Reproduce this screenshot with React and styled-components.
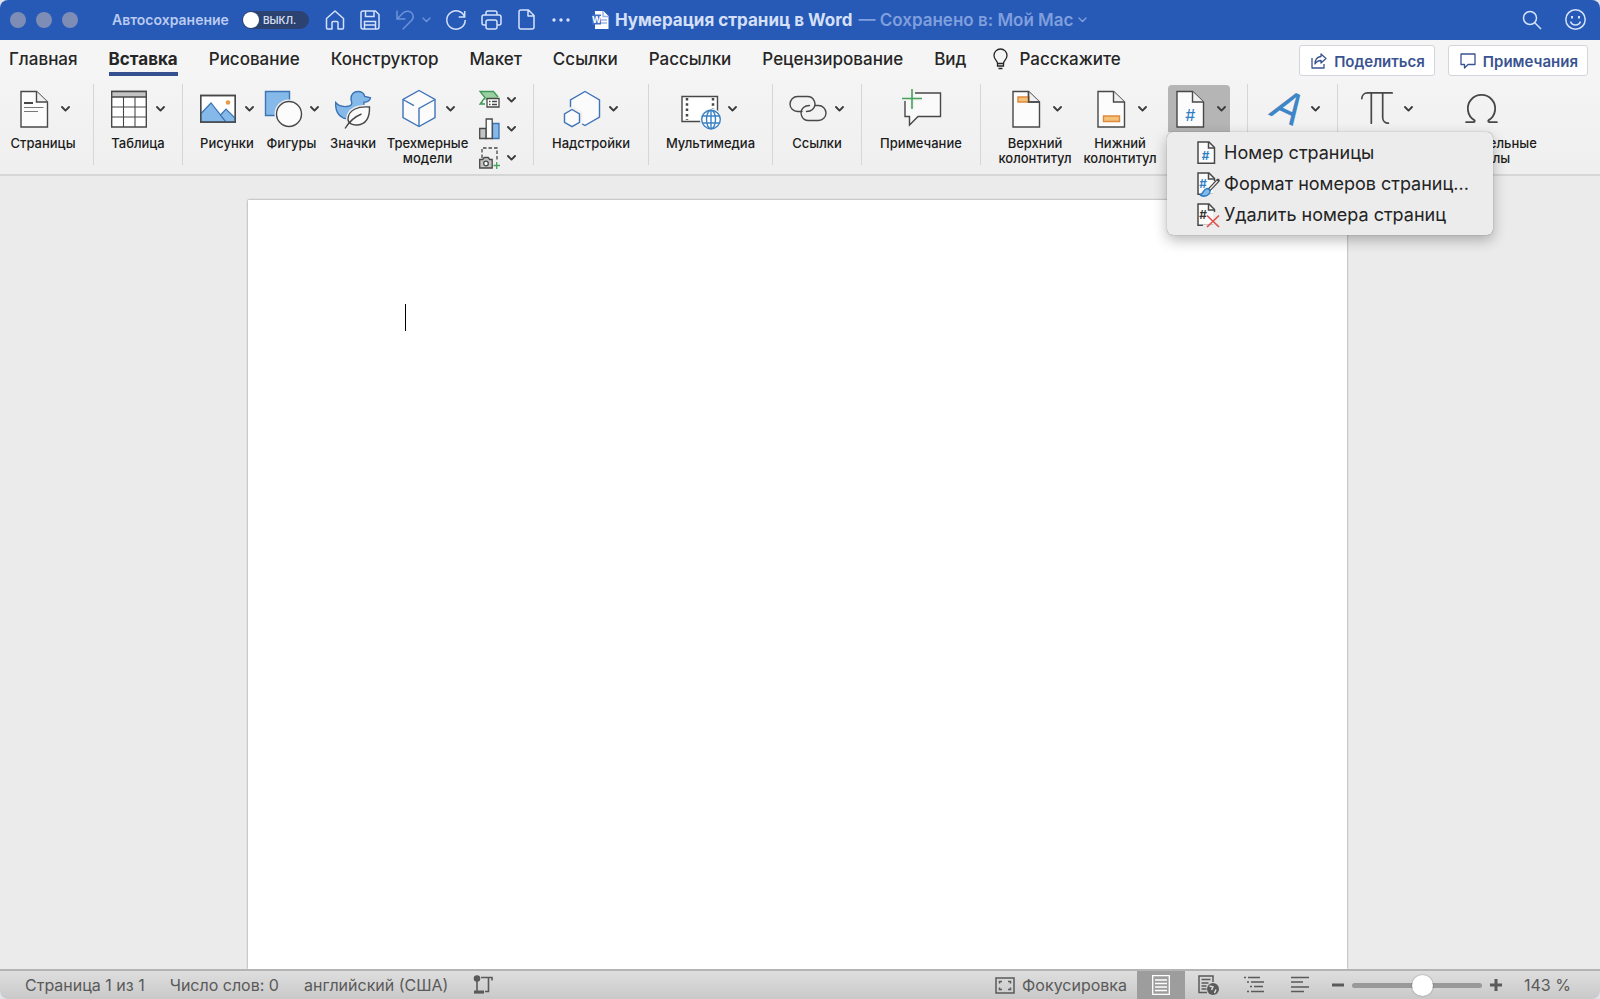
import React from "react"
import styled, { createGlobalStyle, css, ThemeProvider } from "styled-components"
import { Omega, Pi } from "lucide-react"

const theme = {
  colors: {
    title: "#2759b6",
    titleText: "#d5e0f8",
    titleMuted: "#7f9fdd",
    ink: "#262626",
    link: "#3a5391",
    desk: "#ebebeb",
    status: "#5a5a5a",
  },
}

const GlobalStyle = createGlobalStyle`
  * {
    box-sizing: border-box;
  }
  body {
    margin: 0;
    background: #dfe3ea;
    font-family: Inter, "Liberation Sans", sans-serif;
  }
  button {
    margin: 0;
    padding: 0;
    border: 0;
    background: none;
    color: inherit;
    font: inherit;
    white-space: nowrap;
  }
  svg {
    display: block;
    flex: none;
    overflow: visible;
  }
`

const Window = styled.div`
  display: flex;
  flex-direction: column;
  min-height: 100vh;
  border-radius: 8px;
  overflow: hidden;
  background: ${props => props.theme.colors.desk};
`

/* Title bar */
const TitleBar = styled.header`
  display: flex;
  align-items: center;
  height: 40px;
  padding: 0 14px 1px 10px;
  background: ${props => props.theme.colors.title};
  color: ${props => props.theme.colors.titleText};
`
const Lights = styled.div`
  display: flex;
  gap: 10px;
  margin-right: 34px;
`
const Light = styled.button`
  width: 16px;
  height: 16px;
  border-radius: 50%;
  background: #7d8db5;
`
const AutoSave = styled.label`
  display: flex;
  align-items: center;
  gap: 13px;
  font-size: 14px;
  font-weight: 600;
  color: #b9cbf0;
  white-space: nowrap;
`
const Switch = styled.span`
  display: flex;
  align-items: center;
  gap: 4px;
  width: 67px;
  height: 18px;
  padding-left: 1px;
  border-radius: 9px;
  background: #2c4371;
  color: #d3dcee;
  font-size: 10px;
  font-weight: 600;
`
const SwitchBox = styled.input`
  appearance: none;
  margin: 0;
  width: 16px;
  height: 16px;
  border-radius: 50%;
  background: #fff;
`
const QuickBar = styled.div`
  display: flex;
  align-items: center;
  gap: 14px;
  margin: 0 20px 0 16px;
`
const QuickButton = styled.button`
  display: flex;
  align-items: center;
  justify-content: center;
  width: ${props => (props.$slim ? "10px" : "21px")};
  height: 24px;
  color: ${props => (props.$dim ? "#6d92d8" : "#d5e2fb")};
`
const UndoGroup = styled.div`
  display: flex;
  gap: 6px;
`
const DocTitle = styled.h1`
  display: flex;
  align-items: center;
  gap: 6px;
  flex: 1;
  margin: 0;
  font-size: 17px;
  font-weight: 700;
  white-space: nowrap;
`
const SavedIn = styled.button`
  display: flex;
  align-items: center;
  gap: 5px;
  font-weight: 600;
  color: ${props => props.theme.colors.titleMuted};
`
const TitleActions = styled.div`
  display: flex;
  gap: 23px;
`

/* Tabs */
const TabRow = styled.div`
  display: flex;
  align-items: flex-start;
  height: 40px;
  padding: 5px 12px 0 9px;
  background: #f5f5f5;
`
const Tabs = styled.nav`
  display: flex;
  flex: 1;
  gap: 31px;
`
const Tab = styled.button`
  display: flex;
  align-items: center;
  gap: 11px;
  height: 31px;
  border-bottom: 4px solid transparent;
  font-size: 17px;
  font-weight: 500;
  color: ${props => props.theme.colors.ink};
  ${props =>
    props.$active &&
    css`
      font-weight: 700;
      border-image: linear-gradient(#35508f, #35508f) 1;
    `}
`
const TellMe = styled(Tab)`
  margin-left: -4px;
`
const TabActions = styled.div`
  display: flex;
  gap: 13px;
`
const ActionButton = styled.button`
  display: flex;
  align-items: center;
  gap: 7px;
  height: 31px;
  padding: 1px 9px 0 11px;
  border: 1px solid #d2d6dc;
  border-radius: 3px;
  background: #fff;
  color: ${props => props.theme.colors.link};
  font-size: 15px;
  font-weight: 600;
`

/* Ribbon */
const Ribbon = styled.div`
  display: flex;
  height: 96px;
  padding: 4px 0 11px;
  border-bottom: 2px solid #d6d6d6;
  background: linear-gradient(#f4f4f4, #efefef);
`
const Group = styled.div`
  display: flex;
  gap: 10px;
  height: 81px;
  padding: 1px 16px 0;
  border-right: 1px solid #d6d6d6;
  &:first-child {
    padding-left: 9px;
  }
  &:last-child {
    border-right: 0;
  }
`
const Tool = styled.div`
  position: relative;
  display: flex;
  flex-direction: column;
  align-items: center;
  width: ${props => props.$width}px;
`
const ToolButton = styled.button`
  display: flex;
  flex-direction: column;
  align-items: center;
  gap: 4px;
  color: #1c1c1c;
`
const ToolFace = styled.span`
  display: flex;
  align-items: center;
  gap: 9px;
  height: 47px;
  padding: 0 4px;
  border-radius: 4px 4px 0 0;
  color: #3c3c3c;
  background: ${props => (props.$open ? "#b5b5b5" : "transparent")};
`
const ToolLabel = styled.span`
  font-size: 13px;
  font-weight: 500;
  line-height: 15px;
  white-space: pre-line;
`
const SmallTools = styled.div`
  display: flex;
  flex-direction: column;
  width: 40px;
`
const SmallTool = styled.button`
  display: flex;
  align-items: center;
  flex: none;
  gap: 7px;
  height: 29px;
  padding-left: 2px;
  color: #3c3c3c;
`
const Menu = styled.div`
  position: absolute;
  z-index: 2;
  top: 47px;
  left: 0;
  width: 326px;
  padding: 5px 0;
  border-radius: 6px;
  background: #ececec;
  box-shadow: 0 0 1px rgba(0, 0, 0, 0.5), 0 5px 14px rgba(0, 0, 0, 0.28);
`
const MenuItem = styled.button`
  display: flex;
  align-items: center;
  gap: 5px;
  width: 100%;
  height: 31px;
  padding-left: 29px;
  font-size: 18px;
  color: #232323;
`

/* Document */
const Desk = styled.main`
  display: flex;
  flex: 1;
  padding: 24px 253px 0 248px;
`
const Sheet = styled.div`
  flex: 1;
  padding: 104px 157px;
  background: #fff;
  box-shadow: 0 0 2px rgba(0, 0, 0, 0.45);
`
const Caret = styled.span`
  display: block;
  width: 1px;
  height: 27px;
  background: #000;
`

/* Status bar */
const StatusBar = styled.footer`
  display: flex;
  align-items: stretch;
  height: 30px;
  padding: 0 30px 0 25px;
  border-top: 2px solid #b4b4b4;
  background: linear-gradient(#dedede, #c9c9c9);
  color: ${props => props.theme.colors.status};
  font-size: 16px;
`
const StatusInfo = styled.div`
  display: flex;
  align-items: center;
  flex: 1;
  gap: 25px;
`
const FocusButton = styled.button`
  display: flex;
  align-items: center;
  gap: 7px;
  margin-right: 10px;
`
const ViewButton = styled.button`
  display: flex;
  align-items: center;
  justify-content: center;
  width: ${props => (props.$active ? "48px" : "46px")};
  background: ${props => (props.$active ? "#9d9d9d" : "transparent")};
`
const Zoom = styled.div`
  display: flex;
  align-items: center;
  gap: 8px;
  margin-left: 9px;
`
const ZoomRange = styled.input`
  appearance: none;
  width: 130px;
  height: 20px;
  margin: 0;
  background: transparent;
  &::-webkit-slider-runnable-track {
    height: 5px;
    border-radius: 3px;
    background: #999;
  }
  &::-webkit-slider-thumb {
    appearance: none;
    width: 21px;
    height: 21px;
    margin-top: -8px;
    border-radius: 50%;
    background: #fff;
    box-shadow: 0 0 2px rgba(0, 0, 0, 0.35);
  }
`
const ZoomValue = styled.span`
  width: 46px;
  margin-left: 14px;
  white-space: nowrap;
`

const Svg = ({ w = 20, h = 20, children, ...rest }) => (
  <svg width={w} height={h} viewBox={`0 0 ${w} ${h}`} fill="none" stroke="currentColor" strokeWidth="1.5" aria-hidden="true" {...rest}>
    {children}
  </svg>
)

const Chevron = ({ thin }) => (
  <Svg w={9} h={6} strokeWidth={thin ? 1.4 : 1.9} strokeLinecap="round" strokeLinejoin="round">
    <path d="M1 1l3.5 3.6L8 1" />
  </Svg>
)

// Large ribbon icons share a 36x40 box
const Big = ({ children, ...rest }) => (
  <Svg w={36} h={40} stroke="#484848" strokeWidth="1.4" {...rest}>
    {children}
  </Svg>
)

const PageShape = ({ children }) => (
  <Big>
    <path d="M5 2.5h15.500L31.500 13v25H5z" fill="#fcfcfc" />
    <path d="M20.500 2.500V13h11" fill="#f0f0f0" />
    {children}
  </Big>
)

const icons = {
  pages: (
    <PageShape>
      <path d="M8 14h9" strokeWidth="2" />
      <path d="M8 18.500h19.500M8 22.500h14" stroke="#777" strokeWidth="1.200" />
    </PageShape>
  ),
  table: (
    <Big>
      <path d="M.7 2.500h34.600v35.500H.7z" fill="#fff" />
      <path d="M.7 2.500h34.600v5.500H.7z" fill="#c4c4c4" />
      <path d="M.7 18h34.600M.7 28h34.600M12.500 8v30M24 8v30" strokeWidth="1.100" />
    </Big>
  ),
  pictures: (
    <Big>
      <path d="M.7 6.500h34.600v26.500H.7z" fill="#fff" />
      <path d="M1 24.500L11 14l15 19H1z" fill="#85b9ea" stroke="#3c74b4" strokeWidth="1.200" />
      <path d="M20.500 26l5.500-6 9 9v4h-9z" fill="#85b9ea" stroke="#3c74b4" strokeWidth="1.200" />
      <path d="M.7 6.500h34.600v26.500H.7z" />
      <circle cx="28" cy="13.500" r="2.300" fill="#e59a4a" stroke="none" />
    </Big>
  ),
  shapes: (
    <Big>
      <path d="M.5 2.500h24v24H.5z" fill="#85b9ea" stroke="#3c74b4" />
      <circle cx="24" cy="25" r="14.500" fill="#f2f2f2" stroke="none" />
      <circle cx="24" cy="25" r="12.500" fill="#fcfcfc" />
    </Big>
  ),
  duck: (
    <Big>
      <path d="M16 10.500C15.500 5 19 2.500 23 2.500c3.500 0 6 2 6.800 5l5.700 1.200c-.5 2.800-3 4.500-6.500 4.500 0 9-5 17-14 17C5.500 30.200 0 24 .7 13.500c3 3.500 6 4.500 11 4 5-.5 6-2 4.300-7z" fill="#85b9ea" stroke="#3c74b4" />
      <path d="M34.500 18c-12-1-21 3-21.500 12-.1 4 4 6.500 9.500 6 8.500-.8 12.300-7 12-18z" fill="#fafafa" stroke="#f2f2f2" strokeWidth="4" />
      <path d="M34.500 18c-12-1-21 3-21.500 12-.1 4 4 6.500 9.500 6 8.500-.8 12.300-7 12-18z" fill="#fafafa" />
      <path d="M10 39.500C14 33 19 28 26.500 25" />
    </Big>
  ),
  cube: (
    <Big stroke="#3f74b9">
      <path d="M18 1.500l16 9v18L18 37.500l-16-9v-18z" fill="#fbfbfb" />
      <path d="M34 10.500L18 19.500v18M2 10.500l11 6.200" />
    </Big>
  ),
  addins: (
    <Big stroke="#3f74b9">
      <path d="M21 2.500l14.500 8.500v17L21 36.500 6.500 28V11z" fill="#fbfbfb" />
      <path d="M8 20l8 4.500v9L8 38l-8-4.500v-9z" fill="#fbfbfb" stroke="#f2f2f2" strokeWidth="5" />
      <path d="M8 20.500l7.500 4.300v8.500L8 37.600.5 33.300v-8.500z" fill="#fbfbfb" />
    </Big>
  ),
  media: (
    <Big>
      <path d="M-1 7.500h35.500v25H-1z" fill="#fff" />
      <path d="M4 9v22M30 9v22" strokeWidth="2.500" strokeDasharray="2.500 2.800" />
      <circle cx="28" cy="30.500" r="11" fill="#f2f2f2" stroke="none" />
      <g stroke="#3b82c4">
        <circle cx="28" cy="30.500" r="9.300" fill="#fff" />
        <ellipse cx="28" cy="30.500" rx="4.500" ry="9.300" />
        <path d="M28 21v19M19.500 27h17M19.500 34h17" />
      </g>
    </Big>
  ),
  links: (
    <Big strokeLinecap="round">
      <path d="M12 22.500H7.500a7.500 7.500 0 0 1 0-15h10a7.500 7.500 0 0 1 5 13c-2 1.800-4 2-6 2" />
      <path d="M25 16.500h3.500a7.500 7.500 0 0 1 0 15h-10a7.500 7.500 0 0 1-5-13c2-1.800 3.500-2 6-2" />
    </Big>
  ),
  comment: (
    <Big>
      <path d="M12 4h25.500v23.500H15L6.500 36v-8.500H2V12" fill="#fafafa" />
      <path d="M-.5 9.500h19M9 0v19" stroke="#f2f2f2" strokeWidth="4" />
      <path d="M-1 9.500h20M9 0v20" stroke="#44a35a" strokeWidth="1.600" />
    </Big>
  ),
  header: (
    <PageShape>
      <path d="M10 8h11v5H10z" fill="#f5c178" stroke="#dd8a3c" />
      <path d="M20.500 2.500V13h11" />
    </PageShape>
  ),
  footer: (
    <PageShape>
      <path d="M10.500 27h16v5.500h-16z" fill="#f5c178" stroke="#dd8a3c" />
    </PageShape>
  ),
  pageNumber: (
    <PageShape>
      <text x="13" y="32" fill="#2f7fc4" stroke="none" fontSize="16" fontStyle="italic">#</text>
    </PageShape>
  ),
  wordArt: (
    <Big>
      <text x="16" y="32" fill="#3f86c6" stroke="none" fontSize="43" fontStyle="italic" textAnchor="middle" transform="rotate(25 16 32)">A</text>
    </Big>
  ),
  equation: <Pi width={36} height={40} viewBox="2.500 2 19 21" strokeWidth={0.9} color="#484848" />,
  symbols: <Omega size={41} strokeWidth={1.1} color="#484848" />,
}

const SmartArtIcon = () => (
  <Svg w={21} h={20} stroke="#484848" strokeWidth="1.300">
    <path d="M1 1.500h13.500l5 5-3.500 3.500H4V14H1l4.500-6z" fill="#9bd0a2" stroke="none" />
    <path d="M6 14H1l5-6.500-5-6h13.500l4.500 5.500" stroke="#3f9a58" />
    <path d="M8 8.500h12v8.500H8z" fill="#fff" />
    <path d="M10 11.500h1.500M13 11.500h5M10 14.500h1.500M13 14.500h5" />
  </Svg>
)
const ChartIcon = () => (
  <Svg w={21} h={20} stroke="#484848" strokeWidth="1.300">
    <path d="M.7 9.500h6.500v10H.7z" fill="#c4c4c4" />
    <path d="M13.500 4.500H20v15h-6.500z" fill="#85b9ea" stroke="#3c74b4" />
    <path d="M7.200 0h6v19.500h-6z" fill="#fff" />
  </Svg>
)
const ScreenshotIcon = () => (
  <Svg w={21} h={22} stroke="#484848" strokeWidth="1.300">
    <path d="M3 11V1h15v13" strokeDasharray="3.500 2" />
    <path d="M.7 12.500h3l1.500-2h4l1.500 2h2.500v8.500H.7z" fill="#c4c4c4" />
    <circle cx="7" cy="16.500" r="2.300" fill="#fff" />
    <path d="M14.500 18.500h6.500M17.700 15v7" stroke="#44a35a" />
  </Svg>
)

const MenuPage = ({ kind }) => (
  <Svg w={23} h={26} stroke="#484848">
    <path d="M2 2h11l5.500 5.500v15.800H2z" fill="#fcfcfc" />
    <path d="M12.500 2v6h6" />
    {kind !== "number" && <path d="M18.500 10v14H7" stroke="#ececec" strokeWidth="3" />}
    <text x={kind === "number" ? 5.5 : 3} y={kind === "number" ? 20 : 17} fill={kind === "remove" ? "#333" : "#2f7fc4"} stroke="none" fontSize="12" fontWeight="600" fontStyle="italic">#</text>
    {kind === "format" && (
      <>
        <path d="M22 9.500L13 19" stroke="#444" strokeWidth="3.600" strokeLinecap="round" />
        <path d="M21.500 10L14 18" stroke="#eee" strokeWidth="1.300" />
        <path d="M4 24c3 0 3-6 7-6.500 3 .2 4 3 2 5.500-2.500 2.500-6 2.500-9 1z" fill="#85b9ea" stroke="#2f7fc4" />
      </>
    )}
    {kind === "remove" && <path d="M11 13.500L23 25M23 13.500L11 25" stroke="#e0524c" strokeWidth="1.700" />}
  </Svg>
)

const ribbon = [
  [{ id: "pages", label: "Страницы", width: 68 }],
  [{ id: "table", label: "Таблица", width: 56 }],
  [
    { id: "pictures", label: "Рисунки", width: 56 },
    { id: "shapes", label: "Фигуры", width: 53 },
    { id: "duck", label: "Значки", width: 50, plain: true },
    { id: "cube", label: "Трехмерные\nмодели", width: 79 },
    { id: "small" },
  ],
  [{ id: "addins", label: "Надстройки", width: 82 }],
  [{ id: "media", label: "Мультимедиа", width: 91 }],
  [{ id: "links", label: "Ссылки", width: 56 }],
  [{ id: "comment", label: "Примечание", width: 86, plain: true }],
  [
    { id: "header", label: "Верхний\nколонтитул", width: 76 },
    { id: "footer", label: "Нижний\nколонтитул", width: 74 },
    { id: "pageNumber", name: "Номер страницы", width: 64, open: true },
  ],
  [{ id: "wordArt", name: "Текст", width: 57 }],
  [
    { id: "equation", name: "Уравнение", width: 64 },
    { id: "symbols", label: "Дополнительные\nсимволы", width: 106, plain: true },
  ],
]

const tabs = ["Главная", "Вставка", "Рисование", "Конструктор", "Макет", "Ссылки", "Рассылки", "Рецензирование", "Вид"]

const PageNumberMenu = () => (
  <Menu role="menu">
    <MenuItem role="menuitem"><MenuPage kind="number" />Номер страницы</MenuItem>
    <MenuItem role="menuitem"><MenuPage kind="format" />Формат номеров страниц...</MenuItem>
    <MenuItem role="menuitem"><MenuPage kind="remove" />Удалить номера страниц</MenuItem>
  </Menu>
)

const RibbonTool = ({ tool }) => {
  if (tool.id === "small") {
    return (
      <SmallTools>
        <SmallTool aria-label="SmartArt"><SmartArtIcon /><Chevron /></SmallTool>
        <SmallTool aria-label="Диаграмма"><ChartIcon /><Chevron /></SmallTool>
        <SmallTool aria-label="Снимок экрана"><ScreenshotIcon /><Chevron /></SmallTool>
      </SmallTools>
    )
  }
  return (
    <Tool $width={tool.width}>
      <ToolButton aria-label={tool.name} aria-expanded={tool.open}>
        <ToolFace $open={tool.open}>
          {icons[tool.id]}
          {!tool.plain && <Chevron />}
        </ToolFace>
        {tool.label && <ToolLabel>{tool.label}</ToolLabel>}
      </ToolButton>
      {tool.open && <PageNumberMenu />}
    </Tool>
  )
}

const App = () => (
  <ThemeProvider theme={theme}>
    <GlobalStyle />
    <Window>
      <TitleBar>
        <Lights>
          <Light aria-label="Закрыть" />
          <Light aria-label="Свернуть" />
          <Light aria-label="Развернуть" />
        </Lights>
        <AutoSave>
          Автосохранение
          <Switch><SwitchBox type="checkbox" />ВЫКЛ.</Switch>
        </AutoSave>
        <QuickBar>
          <QuickButton aria-label="Домой">
            <Svg strokeLinejoin="round"><path d="M1.500 8.500L10 1l8.500 7.500V18q0 1-1 1H13v-6.500q0-1-1-1H8q-1 0-1 1V19H2.500q-1 0-1-1z" /></Svg>
          </QuickButton>
          <QuickButton aria-label="Сохранить">
            <Svg><path d="M1 3q0-2 2-2h12.500L19 4.500V17q0 2-2 2H3q-2 0-2-2zM5.500 1v5.500H14V1M4.500 19v-7.500h11V19M5 15h10" /></Svg>
          </QuickButton>
          <UndoGroup>
            <QuickButton $dim aria-label="Отменить">
              <Svg strokeLinecap="round"><path d="M2 1v8h8M2 9l6-6c3-3 8-2 9.500 1 1.500 3 .5 5-1 6.500L8 19" /></Svg>
            </QuickButton>
            <QuickButton $dim $slim aria-label="Варианты отмены"><Chevron thin /></QuickButton>
          </UndoGroup>
          <QuickButton aria-label="Повторить">
            <Svg><path d="M18.500 6.500A9.200 9.200 0 1 0 19.200 10M18.700 1v6h-6" /></Svg>
          </QuickButton>
          <QuickButton aria-label="Печать">
            <Svg w={21}><path d="M5 5V3q0-2 2-2h7q2 0 2 2v2M5 15H3q-2 0-2-2V7q0-2 2-2h15q2 0 2 2v6q0 2-2 2h-2M7 10h7q2 0 2 2v5q0 2-2 2H7q-2 0-2-2v-5q0-2 2-2z" /></Svg>
          </QuickButton>
          <QuickButton aria-label="Создать">
            <Svg w={17} h={21} strokeLinejoin="round"><path d="M3 1h7.500L16 6.500V18q0 2-2 2H3q-2 0-2-2V3q0-2 2-2zM10 1v6h6" /></Svg>
          </QuickButton>
          <QuickButton aria-label="Ещё">
            <Svg fill="currentColor" stroke="none"><circle cx="3" cy="10" r="1.700" /><circle cx="10" cy="10" r="1.700" /><circle cx="17" cy="10" r="1.700" /></Svg>
          </QuickButton>
        </QuickBar>
        <DocTitle>
          <Svg w={17} h={20} stroke="none">
            <path d="M3 1h8.500L16.500 6v13H3z" fill="#fff" />
            <path d="M11 1v5.500h5.500M9 10h6M9 13h6" stroke="#9ab5e6" />
            <path d="M0 4.500h9v10H0z" fill="#3f6fc4" />
            <text x="0" y="12.500" fill="#fff" fontSize="9" fontWeight="700">W</text>
          </Svg>
          Нумерация страниц в Word
          <SavedIn>— Сохранено в: Мой Mac <Chevron thin /></SavedIn>
        </DocTitle>
        <TitleActions>
          <QuickButton aria-label="Поиск">
            <Svg><circle cx="8" cy="8" r="6.500" /><path d="M12.800 12.800L19 19" /></Svg>
          </QuickButton>
          <QuickButton aria-label="Отзыв">
            <Svg w={21} h={21}>
              <circle cx="10.500" cy="10.500" r="9.700" />
              <path d="M5.500 12.500c1.500 4.500 8.500 4.500 10 0" />
              <path d="M7 7v2.500M14 7v2.500" strokeWidth="2" />
            </Svg>
          </QuickButton>
        </TitleActions>
      </TitleBar>

      <TabRow>
        <Tabs>
          {tabs.map(name => (
            <Tab key={name} $active={name === "Вставка"}>{name}</Tab>
          ))}
          <TellMe>
            <Svg w={15} h={20} strokeWidth="1.300">
              <path d="M4.500 14.500c0-3-3.500-4-3.500-8a6.500 6.500 0 0 1 13 0c0 4-3.500 5-3.500 8zM4.500 14.500V17h6v-2.500M5.500 19.500h4" />
            </Svg>
            Расскажите
          </TellMe>
        </Tabs>
        <TabActions>
          <ActionButton>
            <Svg w={16} h={16} strokeWidth="1.300" strokeLinejoin="round">
              <path d="M1 5v10h12v-4M10 1l5 4.500L10 10V7.500c-3 0-4.500 1-6 3.500 0-4 2-7 6-7.500z" />
            </Svg>
            Поделиться
          </ActionButton>
          <ActionButton>
            <Svg w={16} h={16} strokeWidth="1.300" strokeLinejoin="round"><path d="M1 1h14v10.500H8L4.500 15v-3.500H1z" /></Svg>
            Примечания
          </ActionButton>
        </TabActions>
      </TabRow>

      <Ribbon>
        {ribbon.map(group => (
          <Group key={group[0].id}>
            {group.map(tool => (
              <RibbonTool key={tool.id} tool={tool} />
            ))}
          </Group>
        ))}
      </Ribbon>

      <Desk>
        <Sheet role="textbox" aria-label="Документ">
          <Caret />
        </Sheet>
      </Desk>

      <StatusBar>
        <StatusInfo>
          <span>Страница 1 из 1</span>
          <span>Число слов: 0</span>
          <span>английский (США)</span>
          <Svg strokeWidth="1.600">
            <path d="M4 4v12M8 2.500h11v3M15.500 3v13.500H12M1 17.500h10" />
            <circle cx="4" cy="3.500" r="2.500" fill="currentColor" />
            <path d="M1 17h10" strokeWidth="3" />
          </Svg>
        </StatusInfo>
        <FocusButton>
          <Svg h={17}>
            <path d="M1 1h18v15H1z" />
            <path d="M4.500 6.500v-2H7M13 4.500h2.500v2M15.500 10.500v2H13M7 12.500H4.500v-2" />
          </Svg>
          Фокусировка
        </FocusButton>
        <ViewButton $active aria-label="Разметка страницы">
          <Svg w={18} stroke="#fff" strokeWidth="1.300"><path d="M.7.7h16.600v18.600H.7zM3 5h12M3 8.500h12M3 12h12M3 15.500h12" /></Svg>
        </ViewButton>
        <ViewButton aria-label="Веб-документ">
          <Svg w={21}>
            <path d="M9 17.500H1V1h14v6M3.500 4.500h9M3.500 8h7M3.500 11h5M3.500 14h5" />
            <circle cx="15" cy="14" r="6" fill="currentColor" stroke="none" />
            <path d="M11.500 11l3.500 1-1.500 3M16.500 18l1.500-3.500" stroke="#ddd" strokeWidth="1.500" />
          </Svg>
        </ViewButton>
        <ViewButton aria-label="Структура">
          <Svg><path d="M0 2.500h2M4 2.500h12M3 7h2M7 7h13M6 11.500h2M10 11.500h9M3 16.500h2M7 16.500h13" strokeWidth="1.700" /></Svg>
        </ViewButton>
        <ViewButton aria-label="Черновик">
          <Svg w={18}><path d="M0 2.500h18M0 7h12M0 12h18M0 16.500h13" strokeWidth="1.700" /></Svg>
        </ViewButton>
        <Zoom>
          <button aria-label="Уменьшить"><Svg w={12} h={12} strokeWidth="3"><path d="M0 6h12" /></Svg></button>
          <ZoomRange type="range" min="0" max="100" defaultValue="55" aria-label="Масштаб" />
          <button aria-label="Увеличить"><Svg w={12} h={12} strokeWidth="3"><path d="M0 6h12M6 0v12" /></Svg></button>
          <ZoomValue>143 %</ZoomValue>
        </Zoom>
      </StatusBar>
    </Window>
  </ThemeProvider>
)

export default App
